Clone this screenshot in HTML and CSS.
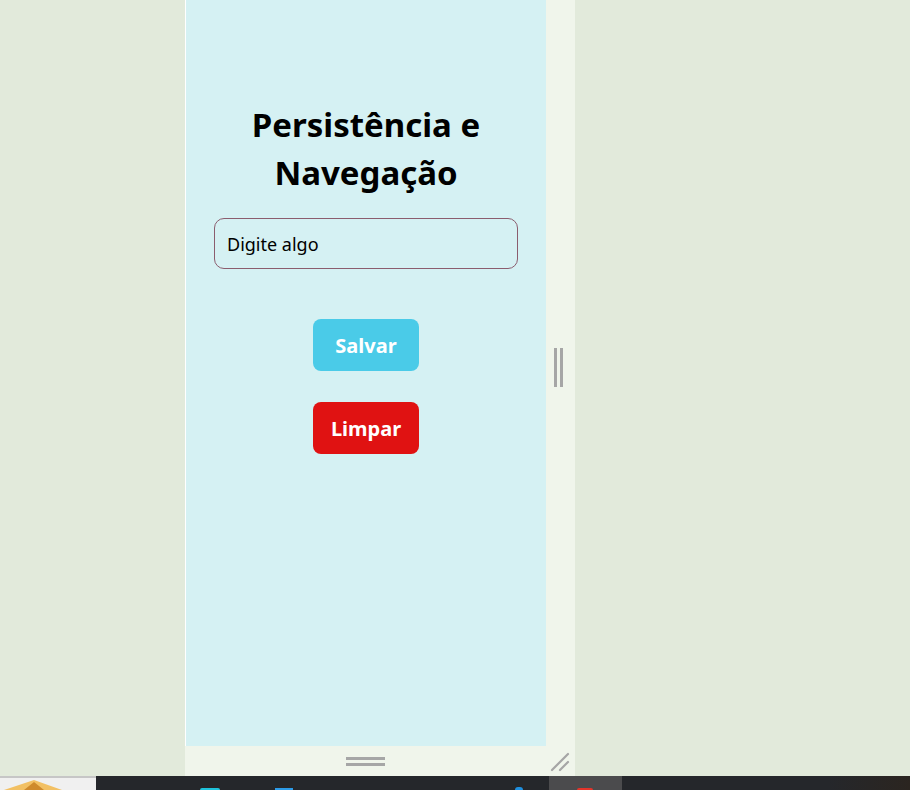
FILE: index.html
```html
<!DOCTYPE html>
<html lang="pt">
<head>
<meta charset="utf-8">
<title>Persistência e Navegação</title>
<link rel="stylesheet" href="styles.css">
</head>
<body>
<div class="stage">
  <div class="device">
    <div class="device-main">
      <div class="screen">
        <h1 class="title">Persistência e Navegação</h1>
        <div class="field">Digite algo</div>
        <div class="actions">
          <button class="btn btn-save">Salvar</button>
          <button class="btn btn-clear">Limpar</button>
        </div>
      </div>
      <div class="side-strip">
        <div class="vgrip"><span></span><span></span></div>
      </div>
    </div>
    <div class="bottom-strip">
      <div class="hgrip"><span></span><span></span></div>
      <svg class="resize" width="22" height="22" viewBox="0 0 22 22">
        <line x1="2" y1="19" x2="18" y2="3" stroke="#a6a6a6" stroke-width="2.2" stroke-linecap="round"/>
        <line x1="10" y1="19" x2="18" y2="11" stroke="#a6a6a6" stroke-width="2.2" stroke-linecap="round"/>
      </svg>
    </div>
  </div>
</div>
<div class="taskbar">
  <div class="start">
    <svg width="70" height="12" viewBox="0 0 70 12">
      <polygon points="4,12 34,2 62,12" fill="#f2c063"/>
      <polygon points="24,12 34,4 44,12" fill="#cf8a2c"/>
    </svg>
  </div>
  <div class="tasks">
    <span class="ic ic-cyan"></span>
    <span class="ic ic-blue"></span>
    <span class="ic ic-drop"></span>
    <span class="active"><span class="ic ic-red"></span></span>
  </div>
</div>
</body>
</html>
```

FILE: styles.css
```css
* { box-sizing: border-box; }

html, body {
  margin: 0;
  padding: 0;
}

body {
  width: 910px;
  height: 790px;
  overflow: hidden;
  background: #e2eadb;
  font-family: "Noto Sans", "Open Sans", sans-serif;
  display: flex;
  flex-direction: column;
}

.stage {
  height: 776px;
  display: flex;
  padding-left: 185px;
}

.device {
  width: 390px;
  height: 776px;
  background: #f0f5eb;
  display: flex;
  flex-direction: column;
}

.device-main {
  height: 746px;
  display: flex;
}

.screen {
  width: 361px;
  border-left: 1px solid #ffffff;
  background: #d5f1f3;
  display: flex;
  flex-direction: column;
  align-items: center;
  padding-top: 101px;
}

.title {
  margin: 0;
  width: 260px;
  text-align: center;
  font-size: 33px;
  line-height: 48px;
  font-weight: 700;
  color: #000;
}

.field {
  margin-top: 21px;
  width: 304px;
  height: 51px;
  border: 1px solid #8b5d6e;
  border-radius: 10px;
  padding-left: 12px;
  display: flex;
  align-items: center;
  font-size: 18px;
  color: #000;
}

.actions {
  margin-top: 50px;
  display: flex;
  flex-direction: column;
  align-items: center;
  gap: 31px;
}

.btn {
  width: 106px;
  height: 52px;
  border: none;
  border-radius: 8px;
  color: #fff;
  font-family: "Noto Sans", "Open Sans", sans-serif;
  font-size: 20px;
  font-weight: 700;
  padding: 0;
}

.btn-save { background: #4acbe8; }
.btn-clear { background: #e01212; }

.side-strip {
  flex: 1;
  display: flex;
  align-items: center;
  padding-left: 8px;
}

.vgrip {
  display: flex;
  gap: 3px;
  margin-bottom: 11px;
}

.vgrip span {
  width: 3px;
  height: 39px;
  background: #a6a6a6;
}

.bottom-strip {
  position: relative;
  flex: 1;
  display: flex;
  align-items: center;
  padding-left: 161px;
}

.hgrip {
  display: flex;
  flex-direction: column;
  gap: 3px;
}

.hgrip span {
  width: 39px;
  height: 3px;
  background: #a6a6a6;
}

.resize {
  position: absolute;
  left: 365px;
  top: 5px;
}

.taskbar {
  height: 14px;
  display: flex;
  background: #25272b;
}

.start {
  width: 96px;
  background: #f0f0f0;
  border-top: 2px solid #c6c6c6;
  display: flex;
  align-items: flex-end;
}

.start svg { display: block; }

.tasks {
  flex: 1;
  display: flex;
  align-items: flex-end;
  padding-left: 104px;
  background: linear-gradient(90deg, #25272b 0%, #25272b 90%, #2b2520 100%);
}

.ic { display: block; }

.ic-cyan {
  width: 20px;
  height: 2px;
  border-radius: 10px 10px 0 0;
  background: #1fc3dc;
}

.ic-blue {
  margin-left: 55px;
  width: 18px;
  height: 2px;
  background: #2c9be8;
}

.ic-drop {
  margin-left: 222px;
  width: 8px;
  height: 3px;
  border-radius: 4px 4px 0 0;
  background: #1e8fe0;
}

.active {
  margin-left: 26px;
  width: 73px;
  height: 14px;
  background: #4b4b4d;
  display: flex;
  align-items: flex-end;
  padding-left: 28px;
}

.ic-red {
  width: 16px;
  height: 2px;
  border-radius: 8px 8px 0 0;
  background: #e3342a;
}
```
